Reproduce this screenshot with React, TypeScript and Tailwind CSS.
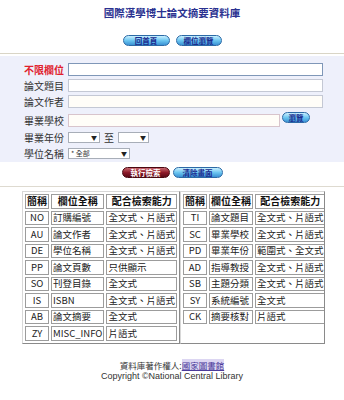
import React from "react"

const left = [
  ["NO", "訂購編號", "全文式、片語式"],
  ["AU", "論文作者", "全文式、片語式"],
  ["DE", "學位名稱", "全文式、片語式"],
  ["PP", "論文頁數", "只供顯示"],
  ["SO", "刊登目錄", "全文式"],
  ["IS", "ISBN", "全文式、片語式"],
  ["AB", "論文摘要", "全文式"],
  ["ZY", "MISC_INFO", "片語式"],
]

const right = [
  ["TI", "論文題目", "全文式、片語式"],
  ["SC", "畢業學校", "全文式、片語式"],
  ["PD", "畢業年份", "範圍式、全文式"],
  ["AD", "指導教授", "全文式、片語式"],
  ["SB", "主題分類", "全文式、片語式"],
  ["SY", "系統編號", "全文式"],
  ["CK", "摘要核對", "片語式"],
]

function Pill({ label, red, className = "" }: { label: string; red?: boolean; className?: string }) {
  return (
    <div
      className={`flex h-[11px] items-center justify-center rounded-full border text-[7.5px] font-bold leading-none ${
        red
          ? "border-[#4a0810] bg-linear-to-b from-[#c76570] via-[#8e1a2a] to-[#5a0a16] text-white"
          : "border-[#2c6aa6] bg-linear-to-b from-[#c8f0ff] via-[#6cc6f0] to-[#3a92d4] text-[#1c2a8e]"
      } ${className}`}
    >
      {label}
    </div>
  )
}

function Select({ className = "", text }: { className?: string; text?: string }) {
  return (
    <div className={`flex h-[11px] items-center justify-between border border-[#a8aeb8] bg-white px-[2px] ${className}`}>
      <span className="text-[7px] leading-none text-[#333]">{text}</span>
      <span className="text-[6px] leading-none text-[#222]">▼</span>
    </div>
  )
}

function FieldTable({ rows, widths }: { rows: string[][]; widths: string[] }) {
  const cell = "h-[14.5px] border border-[#9c9c9c] p-0 px-[1px] leading-none whitespace-nowrap overflow-hidden"
  return (
    <table className="table-fixed border-separate border-spacing-[2px]">
      <colgroup>
        {widths.map((w, i) => (
          <col key={i} className={w} />
        ))}
      </colgroup>
      <thead>
        <tr className="text-[10px] font-bold text-[#111]">
          <td className={`${cell} text-center`}>簡稱</td>
          <td className={`${cell} text-center`}>欄位全稱</td>
          <td className={`${cell} text-center`}>配合檢索能力</td>
        </tr>
      </thead>
      <tbody>
        {rows.map((r) => (
          <tr key={r[0]} className="text-[9.5px] text-[#222]">
            <td className={`${cell} text-center`}>{r[0]}</td>
            <td className={cell}>{r[1]}</td>
            <td className={cell}>{r[2]}</td>
          </tr>
        ))}
      </tbody>
    </table>
  )
}

export default function App() {
  return (
    <div className="min-h-[400px] w-[344px] bg-white font-['Noto_Sans_CJK_TC',sans-serif] text-[#222]">
      <h1 className="pt-[6px] text-center text-[10.5px] font-bold leading-[14px] text-[#2a3190]">
        國際漢學博士論文摘要資料庫
      </h1>
      <div className="mt-[15px] flex justify-center gap-[6px]">
        <Pill label="回首頁" className="w-[47px]" />
        <Pill label="欄位瀏覽" className="w-[46px]" />
      </div>
      <div className="mt-[7px] h-px bg-[#d9d5c6]" />

      {/* search form */}
      <div className="mt-[2px] bg-[#eef0fb] pb-[3px] pl-[24px] pr-[21px] pt-[7px] text-[10px] leading-none">
        <div className="flex items-center">
          <span className="w-[44px] font-bold text-[#e0202c]">不限欄位</span>
          <div className="h-[13px] flex-1 border border-[#7f97b8] bg-white" />
        </div>
        <div className="mt-[3px] flex items-center">
          <span className="w-[44px] text-[#333]">論文題目</span>
          <div className="h-[13px] flex-1 border border-[#c4c8d4] bg-white" />
        </div>
        <div className="mt-[3px] flex items-center">
          <span className="w-[44px] text-[#333]">論文作者</span>
          <div className="h-[13px] flex-1 border border-[#c4c8d4] bg-[#fffdf8]" />
        </div>
        <div className="mt-[6px] flex items-start">
          <span className="mt-[2px] w-[44px] text-[#333]">畢業學校</span>
          <div className="h-[13px] w-[212px] border border-[#d8c4cc] bg-[#fffdf8]" />
          <Pill label="瀏覽" className="-mt-[2px] ml-[2px] w-[28px]" />
        </div>
        <div className="mt-[5px] flex items-center">
          <span className="w-[44px] text-[#333]">畢業年份</span>
          <Select className="w-[32px]" />
          <span className="mx-[4px] text-[#333]">至</span>
          <Select className="w-[31px]" />
        </div>
        <div className="mt-[5px] flex items-center">
          <span className="w-[44px] text-[#333]">學位名稱</span>
          <Select className="w-[62px]" text="* 全部" />
        </div>
      </div>

      <div className="mt-[5px] flex justify-center gap-[3px]">
        <Pill label="執行檢索" red className="w-[48px]" />
        <Pill label="清除畫面" className="w-[50px]" />
      </div>
      <div className="mt-[8px] h-px bg-[#dedad0]" />

      {/* field list */}
      <div className="ml-[22px] mt-[4px] flex w-[303px]">
        <div className="w-[158px] overflow-hidden border border-b-[#8a8a8a] border-l-[#d8d8d8] border-r-[#8a8a8a] border-t-[#d8d8d8]">
          <FieldTable rows={left} widths={["w-[22px]", "w-[53px]", "w-[80px]"]} />
        </div>
        <div className="w-[145px] overflow-hidden border border-b-[#8a8a8a] border-l-[#d8d8d8] border-r-[#8a8a8a] border-t-[#d8d8d8]">
          <FieldTable rows={right} widths={["w-[21px]", "w-[43px]", "w-[71px]"]} />
        </div>
      </div>

      <div className="mt-[16px] text-center text-[8.5px] leading-[11px] text-[#333]">
        <p>
          資料庫著作權人:<span className="bg-[#dcd6f2] text-[#4b3a9a] underline">國家圖書館</span>
        </p>
        <p className="font-['Liberation_Sans',sans-serif] text-[9px]">Copyright ©National Central Library</p>
      </div>
    </div>
  )
}
